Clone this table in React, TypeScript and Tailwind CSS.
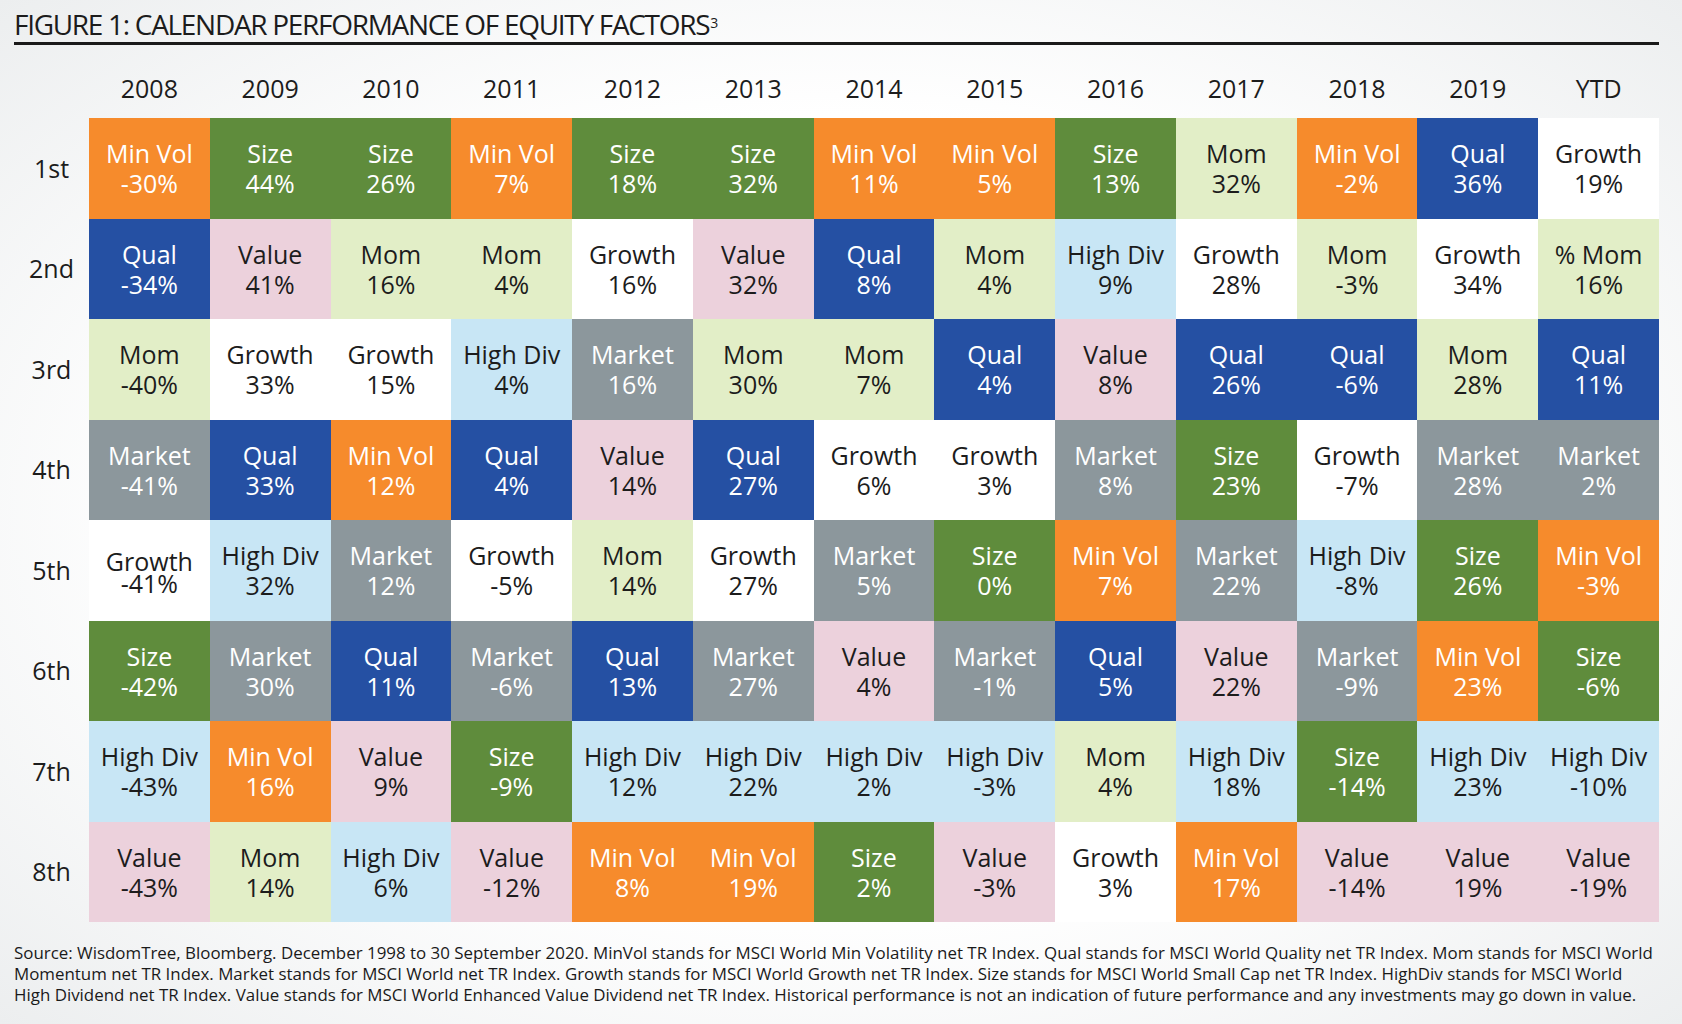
import React from 'react';

type Factor = 'Min Vol' | 'Size' | 'Qual' | 'Market' | 'Mom' | 'Value' | 'High Div' | 'Growth';

const STYLE: Record<Factor, string> = {
  'Min Vol': 'bg-[#f68b2c] text-white',
  Size: 'bg-[#5f8c3c] text-white',
  Qual: 'bg-[#2550a3] text-white',
  Market: 'bg-[#8c979c] text-white',
  Mom: 'bg-[#e2eec7] text-[#1c1c1c]',
  Value: 'bg-[#ecd1dc] text-[#1c1c1c]',
  'High Div': 'bg-[#c8e6f5] text-[#1c1c1c]',
  Growth: 'bg-white text-[#1c1c1c]',
};

const YEARS = ['2008', '2009', '2010', '2011', '2012', '2013', '2014', '2015', '2016', '2017', '2018', '2019', 'YTD'];
const RANKS = ['1st', '2nd', '3rd', '4th', '5th', '6th', '7th', '8th'];

// [factor, return] per year, one array per rank
const ROWS: [Factor, string][][] = [
  [['Min Vol', '-30%'], ['Size', '44%'], ['Size', '26%'], ['Min Vol', '7%'], ['Size', '18%'], ['Size', '32%'], ['Min Vol', '11%'], ['Min Vol', '5%'], ['Size', '13%'], ['Mom', '32%'], ['Min Vol', '-2%'], ['Qual', '36%'], ['Growth', '19%']],
  [['Qual', '-34%'], ['Value', '41%'], ['Mom', '16%'], ['Mom', '4%'], ['Growth', '16%'], ['Value', '32%'], ['Qual', '8%'], ['Mom', '4%'], ['High Div', '9%'], ['Growth', '28%'], ['Mom', '-3%'], ['Growth', '34%'], ['Mom', '16%']],
  [['Mom', '-40%'], ['Growth', '33%'], ['Growth', '15%'], ['High Div', '4%'], ['Market', '16%'], ['Mom', '30%'], ['Mom', '7%'], ['Qual', '4%'], ['Value', '8%'], ['Qual', '26%'], ['Qual', '-6%'], ['Mom', '28%'], ['Qual', '11%']],
  [['Market', '-41%'], ['Qual', '33%'], ['Min Vol', '12%'], ['Qual', '4%'], ['Value', '14%'], ['Qual', '27%'], ['Growth', '6%'], ['Growth', '3%'], ['Market', '8%'], ['Size', '23%'], ['Growth', '-7%'], ['Market', '28%'], ['Market', '2%']],
  [['Growth', '-41%'], ['High Div', '32%'], ['Market', '12%'], ['Growth', '-5%'], ['Mom', '14%'], ['Growth', '27%'], ['Market', '5%'], ['Size', '0%'], ['Min Vol', '7%'], ['Market', '22%'], ['High Div', '-8%'], ['Size', '26%'], ['Min Vol', '-3%']],
  [['Size', '-42%'], ['Market', '30%'], ['Qual', '11%'], ['Market', '-6%'], ['Qual', '13%'], ['Market', '27%'], ['Value', '4%'], ['Market', '-1%'], ['Qual', '5%'], ['Value', '22%'], ['Market', '-9%'], ['Min Vol', '23%'], ['Size', '-6%']],
  [['High Div', '-43%'], ['Min Vol', '16%'], ['Value', '9%'], ['Size', '-9%'], ['High Div', '12%'], ['High Div', '22%'], ['High Div', '2%'], ['High Div', '-3%'], ['Mom', '4%'], ['High Div', '18%'], ['Size', '-14%'], ['High Div', '23%'], ['High Div', '-10%']],
  [['Value', '-43%'], ['Mom', '14%'], ['High Div', '6%'], ['Value', '-12%'], ['Min Vol', '8%'], ['Min Vol', '19%'], ['Size', '2%'], ['Value', '-3%'], ['Growth', '3%'], ['Min Vol', '17%'], ['Value', '-14%'], ['Value', '19%'], ['Value', '-19%']],
];

function Cell({ factor, value, label, tight }: { factor: Factor; value: string; label?: string; tight?: boolean }) {
  return (
    <div
      className={`h-[100.5px] flex flex-col items-center justify-center text-center text-[25px] ${
        tight ? 'leading-[22px] pt-[4px]' : 'leading-[30px]'
      } ${STYLE[factor]}`}
    >
      <span className="whitespace-nowrap">{label ?? factor}</span>
      <span>{value}</span>
    </div>
  );
}

export default function App() {
  return (
    <div className="w-[1682px] h-[1024px] overflow-hidden pl-[14px] pr-[23px] font-['Open_Sans',sans-serif] text-[#1c1c1c] bg-[radial-gradient(ellipse_at_center,#ffffff_55%,#eceeef_100%)]">
      <div className="pt-[10px] pb-[4px] border-b-[3px] border-[#1a1a1a]">
        <h1 className="text-[28px] leading-[28px] tracking-[-1.3px] font-normal whitespace-nowrap">
          FIGURE 1: CALENDAR PERFORMANCE OF EQUITY FACTORS
          <sup className="text-[14px] tracking-normal relative -top-[7px] ml-[1px]">3</sup>
        </h1>
      </div>

      <div className="grid grid-cols-[75px_repeat(13,1fr)]">
        <div />
        {YEARS.map((y) => (
          <div key={y} className="h-[73px] flex items-end justify-center pb-[17px] text-[25px] leading-[25px]">
            {y}
          </div>
        ))}

        {ROWS.map((row, r) => (
          <React.Fragment key={RANKS[r]}>
            <div className="h-[100.5px] flex items-center justify-center text-[25px] leading-[25px]">
              {RANKS[r]}
            </div>
            {row.map(([f, v], c) => (
              <Cell
                key={c}
                factor={f}
                value={v}
                label={r === 1 && c === 12 ? '% Mom' : undefined}
                tight={r === 4 && c === 0}
              />
            ))}
          </React.Fragment>
        ))}
      </div>

      <p className="mt-[20px] text-[16.9px] leading-[21px] text-[#1a1a1a] whitespace-nowrap">
        Source: WisdomTree, Bloomberg. December 1998 to 30 September 2020. MinVol stands for MSCI World Min Volatility net TR Index. Qual stands for MSCI World Quality net TR Index. Mom stands for MSCI World
        <br />
        Momentum net TR Index. Market stands for MSCI World net TR Index. Growth stands for MSCI World Growth net TR Index. Size stands for MSCI World Small Cap net TR Index. HighDiv stands for MSCI World
        <br />
        High Dividend net TR Index. Value stands for MSCI World Enhanced Value Dividend net TR Index. Historical performance is not an indication of future performance and any investments may go down in value.
      </p>
    </div>
  );
}
